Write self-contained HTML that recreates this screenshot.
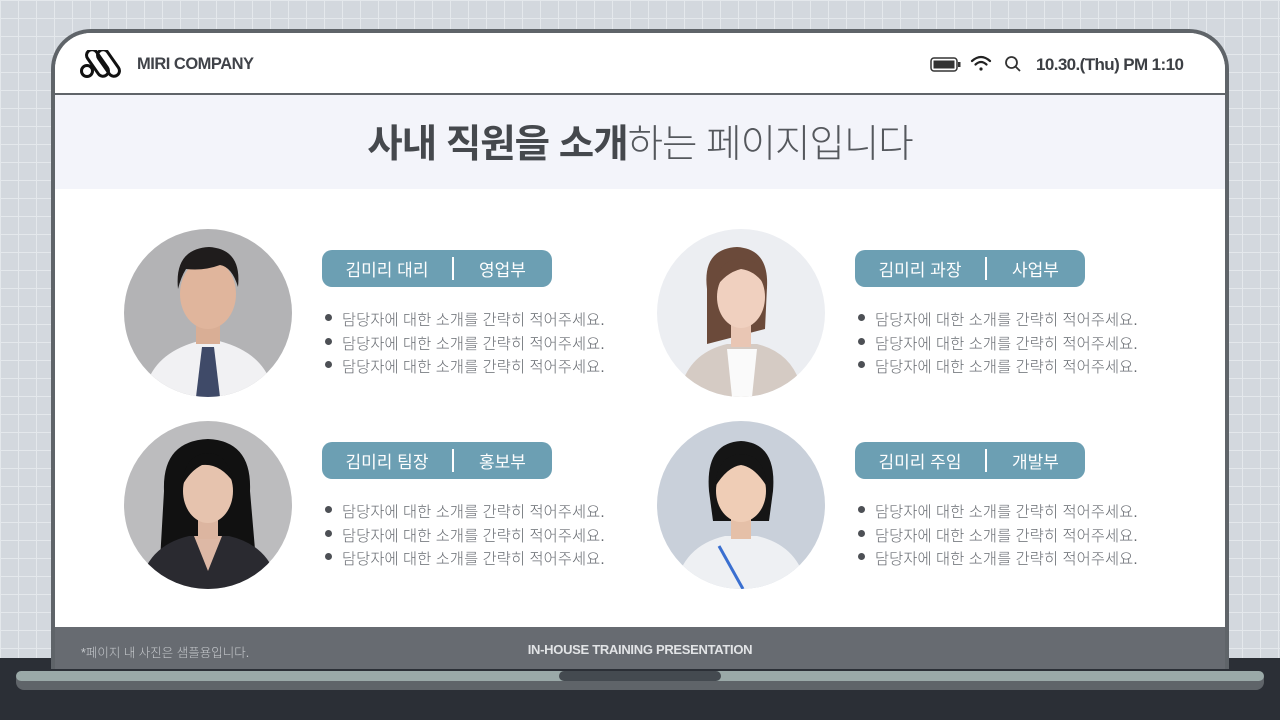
<!DOCTYPE html>
<html><head><meta charset="utf-8">
<style>
*{margin:0;padding:0;box-sizing:border-box}
body{width:1280px;height:720px;overflow:hidden;position:relative;font-family:"Liberation Sans","Noto Sans CJK KR",sans-serif;
background-color:#d3d8de;
background-image:linear-gradient(#e4e8ec 1px,transparent 1px),linear-gradient(90deg,#e4e8ec 1px,transparent 1px);
background-size:18px 18px;}
.base{position:absolute;left:0;top:658px;width:1280px;height:62px;background:#2b2f36}
.frame{position:absolute;left:51px;top:29px;width:1178px;height:640px;border:4px solid #5f6469;border-bottom:none;border-radius:40px 40px 0 0;background:#fff;overflow:hidden}
.hdr{position:absolute;left:0;top:0;width:100%;height:62px;background:#fff;border-bottom:2px solid #5f6469}
.band{position:absolute;left:0;top:62px;width:100%;height:94px;background:#f3f4fa}
.title{position:absolute;left:0;top:80px;width:100%;text-align:center;font-size:38.5px;color:#4a4d52;letter-spacing:-1px}
.title b{font-weight:700;color:#45484d}.title span{font-weight:300;color:#55585d}
.foot{position:absolute;left:0;top:594px;width:100%;height:50px;background:#676b71}
.bar{position:absolute;left:16px;top:671px;width:1248px;height:19px;border-radius:8px;background:#5f6469}
.bar i{position:absolute;left:0;top:0;width:100%;height:10px;border-radius:6px;background:#9aa9a8}
.notch{position:absolute;left:559px;top:671px;width:162px;height:10px;border-radius:5px;background:#444a50}
.pic{position:absolute;width:168px;height:168px;border-radius:50%;overflow:hidden}
.badge{position:absolute;width:230px;height:37px;border-radius:10px;background:#6c9fb3;color:#fff;font-size:17px}
.badge .a{position:absolute;left:0;width:130px;text-align:center;top:6px}
.badge .b{position:absolute;left:131px;width:99px;text-align:center;top:6px}
.badge .d{position:absolute;left:130px;top:7px;width:1.5px;height:23px;background:#fff}
ul{position:absolute;list-style:none;font-size:15.3px;color:#666a70;font-weight:300;letter-spacing:0.1px}
li{height:23.5px;position:relative;padding-left:20px}
li:before{content:"";position:absolute;left:3px;top:6px;width:7px;height:7px;border-radius:50%;background:#4d5055}
</style></head><body>
<div class="base"></div>
<div class="frame">
 <div class="hdr">
  <svg style="position:absolute;left:24px;top:17px" width="46" height="30" viewBox="0 0 46 30" fill="none" stroke="#111" stroke-width="3">
   <circle cx="8" cy="21" r="5.5"/>
   <rect x="13" y="-2" width="11" height="30" rx="5.5" transform="rotate(-35 18.5 13)"/>
   <rect x="24" y="-2" width="11" height="30" rx="5.5" transform="rotate(-35 29.5 13)"/>
  </svg>
  <div style="position:absolute;left:82px;top:22px;font-size:16.5px;font-weight:700;color:#404349;letter-spacing:-0.5px">MIRI COMPANY</div>
  <svg style="position:absolute;left:875px;top:24px" width="32" height="16" viewBox="0 0 32 16"><rect x="1" y="1" width="26" height="13" rx="3" fill="none" stroke="#333" stroke-width="1.5"/><rect x="3.5" y="3.5" width="21" height="8" fill="#333"/><rect x="28" y="5" width="2.5" height="5" fill="#333"/></svg>
  <svg style="position:absolute;left:915px;top:22px" width="22" height="18" viewBox="0 0 22 18" fill="none" stroke="#222" stroke-width="2.2" stroke-linecap="round"><path d="M2 6 Q11 -2 20 6"/><path d="M5.5 9.5 Q11 4.5 16.5 9.5"/><circle cx="11" cy="14" r="1.6" fill="#222" stroke="none"/></svg>
  <svg style="position:absolute;left:949px;top:22px" width="18" height="18" viewBox="0 0 18 18" fill="none" stroke="#333" stroke-width="1.8"><circle cx="7.5" cy="7.5" r="5.5"/><path d="M11.5 11.5 L16 16"/></svg>
  <div style="position:absolute;left:981px;top:22px;font-size:17px;font-weight:700;color:#3c3f44;letter-spacing:-0.6px">10.30.(Thu) PM 1:10</div>
 </div>
 <div class="band"></div>
 <div class="title"><b>사내 직원을 소개</b><span>하는 페이지입니다</span></div>
 <div class="foot">
  <div style="position:absolute;left:26px;top:15px;font-size:12.5px;color:#c5c8cc;font-weight:300">*페이지 내 사진은 샘플용입니다.</div>
  <div style="position:absolute;left:0;width:100%;text-align:center;top:15px;font-size:13px;color:#e2e4e6;font-weight:700;letter-spacing:-0.3px">IN-HOUSE TRAINING PRESENTATION</div>
 </div>
</div>
<div class="bar"><i></i></div><div class="notch"></div>

<div class="pic" style="left:124px;top:229px"><svg width="168" height="168" viewBox="0 0 168 168"><rect width="168" height="168" fill="#b3b3b5"/><path d="M20 168 Q25 125 75 112 L95 112 Q145 125 150 168Z" fill="#f1f1f3"/><path d="M78 118 L90 118 L96 168 L72 168Z" fill="#3f4a68"/><rect x="72" y="85" width="24" height="30" fill="#d9ae95"/><ellipse cx="84" cy="65" rx="28" ry="35" fill="#e0b59c"/><path d="M54 60 Q50 20 85 18 Q118 20 114 58 Q108 38 96 36 Q80 42 62 40 Q57 48 54 60Z" fill="#1f1c1c"/></svg></div>
<div class="pic" style="left:657px;top:229px"><svg width="168" height="168" viewBox="0 0 168 168"><rect width="168" height="168" fill="#eceef2"/><path d="M50 60 Q45 20 80 18 Q112 20 110 58 L108 100 L50 115Z" fill="#6b4a3a"/><path d="M22 168 Q28 125 70 115 L100 115 Q140 125 146 168Z" fill="#d5cbc4"/><path d="M70 120 L100 120 L95 168 L75 168Z" fill="#fafafa"/><rect x="74" y="88" width="20" height="30" fill="#e9c6b4"/><ellipse cx="84" cy="68" rx="24" ry="31" fill="#f0d0bf"/><path d="M58 60 Q60 30 84 30 Q108 30 110 60 Q100 42 84 40 Q68 44 58 60Z" fill="#6b4a3a"/></svg></div>
<div class="pic" style="left:124px;top:421px"><svg width="168" height="168" viewBox="0 0 168 168"><rect width="168" height="168" fill="#bcbcbe"/><path d="M40 70 Q38 20 84 18 Q128 20 126 70 L132 140 L36 140Z" fill="#111"/><path d="M15 168 Q22 125 65 115 L105 115 Q148 125 155 168Z" fill="#2a2a30"/><path d="M70 115 L98 115 L84 150Z" fill="#ddb8a5"/><rect x="74" y="90" width="20" height="28" fill="#dcb5a0"/><ellipse cx="84" cy="70" rx="25" ry="32" fill="#e6c3ae"/><path d="M58 65 Q60 32 86 32 Q104 34 110 62 Q96 42 78 44 Q66 50 58 65Z" fill="#111"/></svg></div>
<div class="pic" style="left:657px;top:421px"><svg width="168" height="168" viewBox="0 0 168 168"><rect width="168" height="168" fill="#c9d0da"/><path d="M52 70 Q48 22 84 20 Q120 22 116 70 L112 100 L56 100Z" fill="#151515"/><path d="M18 168 Q25 125 68 115 L100 115 Q143 125 150 168Z" fill="#eef0f3"/><path d="M62 125 L86 168" stroke="#3a6fd0" stroke-width="3"/><rect x="74" y="90" width="20" height="28" fill="#e5c0a8"/><ellipse cx="84" cy="70" rx="25" ry="31" fill="#efcdb6"/><path d="M58 66 Q60 34 84 33 Q108 34 110 66 Q98 46 84 44 Q70 46 58 66Z" fill="#151515"/></svg></div>

<div class="badge" style="left:322px;top:250px"><div class="a">김미리 대리</div><div class="d"></div><div class="b">영업부</div></div>
<div class="badge" style="left:855px;top:250px"><div class="a">김미리 과장</div><div class="d"></div><div class="b">사업부</div></div>
<div class="badge" style="left:322px;top:442px"><div class="a">김미리 팀장</div><div class="d"></div><div class="b">홍보부</div></div>
<div class="badge" style="left:855px;top:442px"><div class="a">김미리 주임</div><div class="d"></div><div class="b">개발부</div></div>

<ul style="left:322px;top:308px"><li>담당자에 대한 소개를 간략히 적어주세요.</li><li>담당자에 대한 소개를 간략히 적어주세요.</li><li>담당자에 대한 소개를 간략히 적어주세요.</li></ul>
<ul style="left:855px;top:308px"><li>담당자에 대한 소개를 간략히 적어주세요.</li><li>담당자에 대한 소개를 간략히 적어주세요.</li><li>담당자에 대한 소개를 간략히 적어주세요.</li></ul>
<ul style="left:322px;top:500px"><li>담당자에 대한 소개를 간략히 적어주세요.</li><li>담당자에 대한 소개를 간략히 적어주세요.</li><li>담당자에 대한 소개를 간략히 적어주세요.</li></ul>
<ul style="left:855px;top:500px"><li>담당자에 대한 소개를 간략히 적어주세요.</li><li>담당자에 대한 소개를 간략히 적어주세요.</li><li>담당자에 대한 소개를 간략히 적어주세요.</li></ul>
</body></html>
